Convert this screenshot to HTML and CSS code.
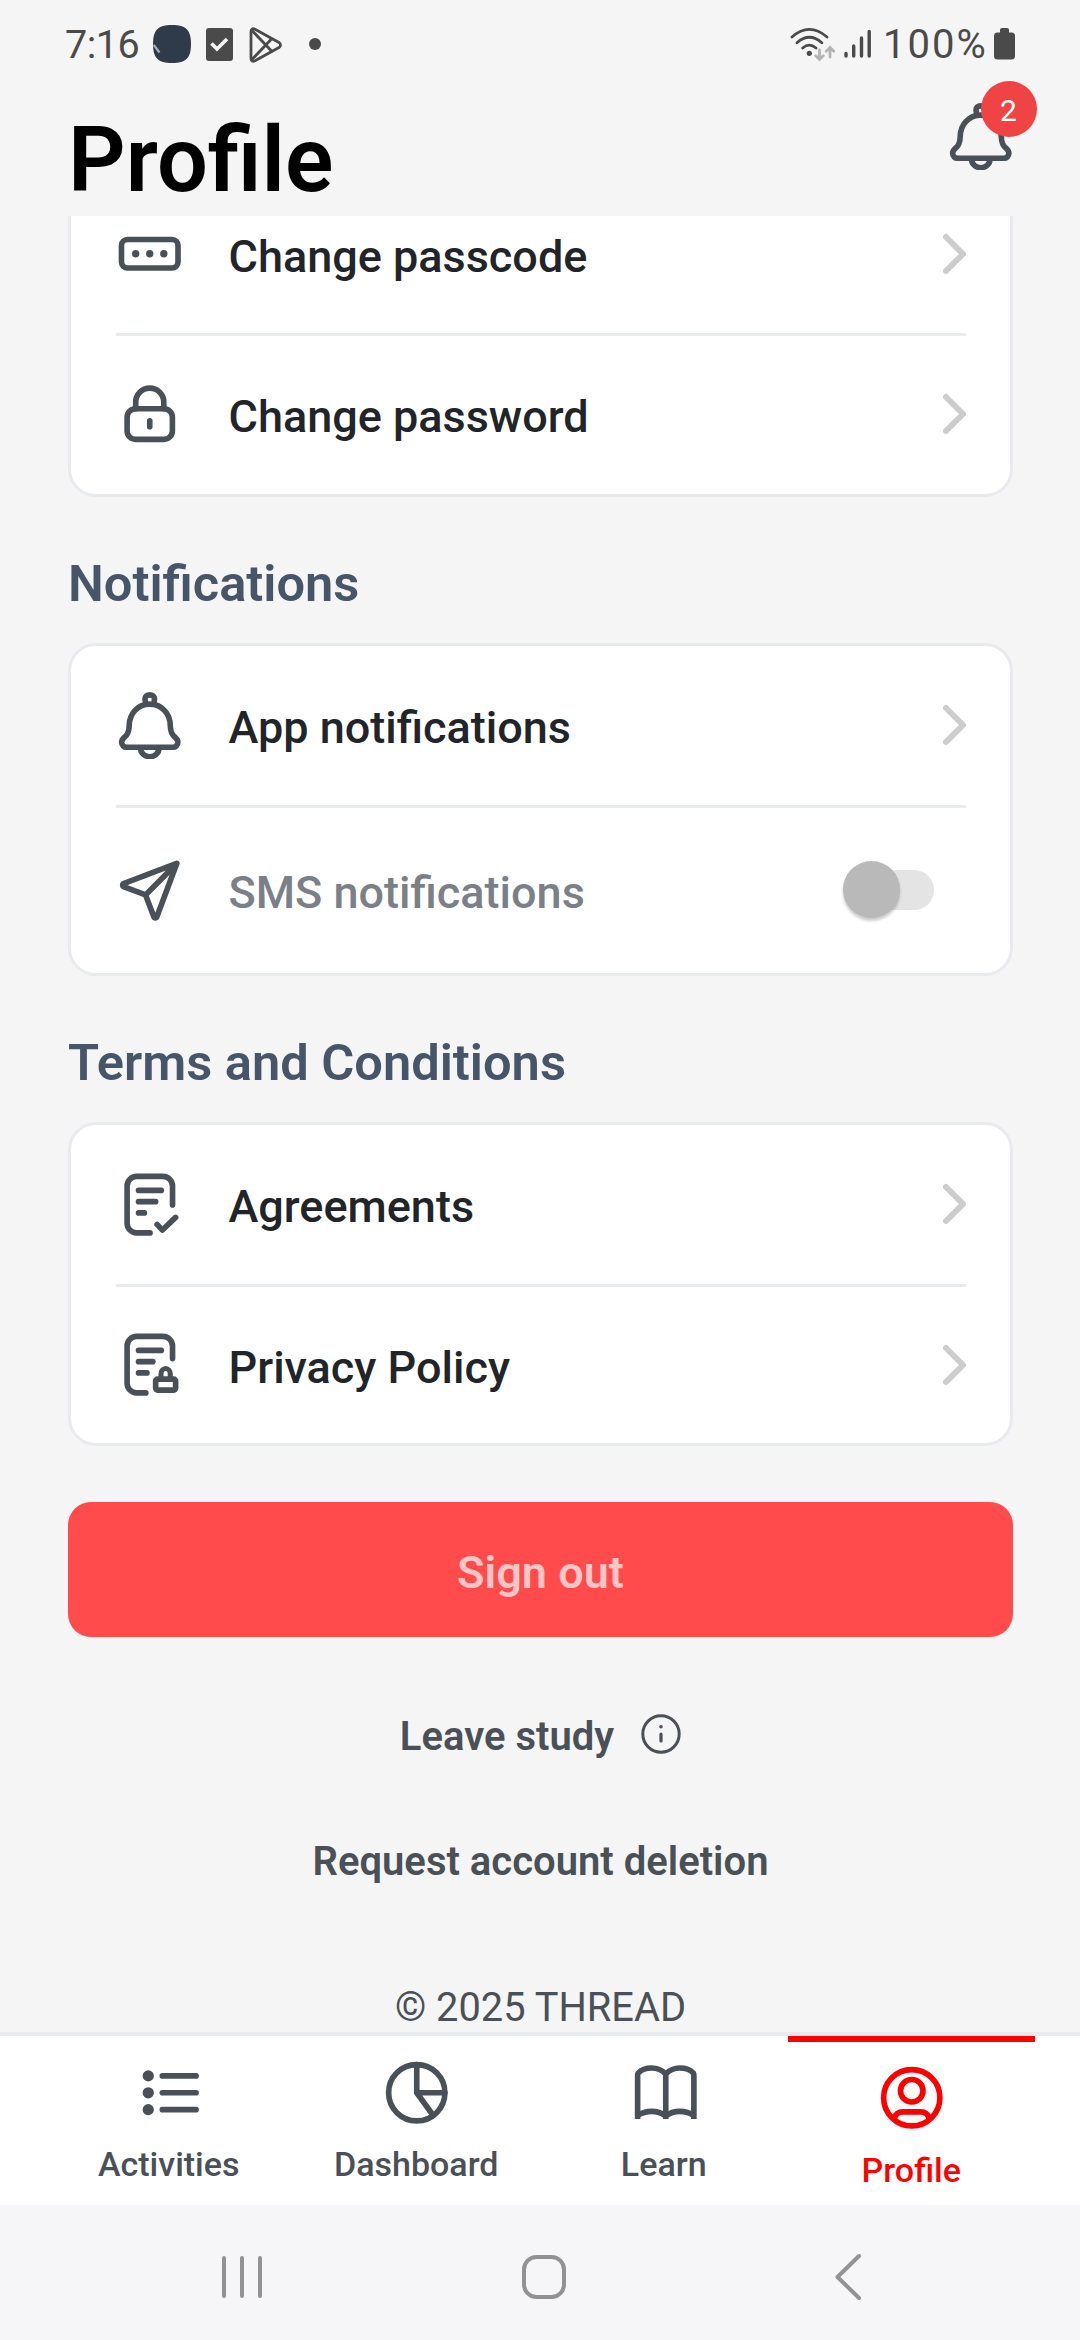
FILE: index.html
```
<!DOCTYPE html>
<html lang="en">
<head>
<meta charset="utf-8">
<title>Profile</title>
<link rel="stylesheet" href="styles.css">
</head>
<body>
<svg class="defs" aria-hidden="true">
  <symbol id="bell" viewBox="0 0 24 24">
    <path d="M4.7 12C4.7 7.7 7.8 4.3 12 4.3S19.3 7.7 19.3 12C19.4 14.4 19.9 15.2 20.8 15.9C21.6 16.6 22 17.2 22 17.9A1.75 1.75 0 0 1 20.2 19.65H3.8A1.75 1.75 0 0 1 2 17.9C2 17.2 2.4 16.6 3.2 15.9C4.1 15.2 4.6 14.4 4.7 12Z"/>
    <path d="M8.7 19.9C8.7 21.7 10.2 23 12 23S15.3 21.7 15.3 19.9M10.6 4.3L10.3 2.5C10.3 1.5 11 1 12 1S13.7 1.5 13.7 2.5L13.4 4.3"/>
  </symbol>
  <symbol id="chevron" viewBox="0 0 24 42"><path d="M4 4L21 21L4 38"/></symbol>
</svg>
<div class="screen">
  <div class="status">
    <span class="clock">7:16</span>
    <svg class="app-dot" viewBox="0 0 38 38"><path d="M19 0C33 0 38 5 38 19S33 38 19 38S0 33 0 19S5 0 19 0Z" fill="#2f3b4a"/><path d="M.8 20L6.5 27.5" stroke="#a9b0b5" stroke-width="2.2"/></svg>
    <svg class="task" viewBox="0 0 27 33"><rect width="27" height="33" rx="3" fill="#4a4a4a"/><path d="M5.5 15.5L11 21L21 11" fill="none" stroke="#f5f5f5" stroke-width="3.6"/></svg>
    <svg class="play" viewBox="0 0 34 36" fill="none" stroke="#4a4a4a" stroke-width="2.8" stroke-linejoin="round"><path d="M2 4.5C2 2 4 1.2 6 2.2L30 15.4C32 16.8 32 19.2 30 20.6L6 33.8C4 34.8 2 34 2 31.5Z"/><path d="M3 3.5L23 24.5M3 32.5L23 11.5"/></svg>
    <i class="more"></i>
    <svg class="wifi" viewBox="0 0 46 36" fill="none" stroke="#4a4a4a" stroke-width="2.8" stroke-linecap="round"><path d="M2 10Q19.3-5.2 37 10M7 15.8Q19.3 4.8 31.8 15.8M12.7 21Q19.3 15.2 26 21"/><circle cx="19.3" cy="26.3" r="2.6" fill="#4a4a4a" stroke="none"/><g stroke="#b3b3b3"><path d="M29.5 23V32M25.7 28.7L29.5 32.3L33.3 28.7M40 30V21M36.2 24.3L40 20.5L43.8 24.3"/></g></svg>
    <svg class="signal" viewBox="0 0 27 30" fill="none" stroke="#4a4a4a" stroke-width="3.4" stroke-linecap="round"><path d="M2 24.5V27M9.7 17V27M17.5 9V27M25.2 2.5V27"/></svg>
    <span class="percent">100%</span>
    <svg class="battery" viewBox="0 0 21 32" fill="#4a4a4a"><rect x="6" width="9" height="8" rx="2"/><rect y="4.5" width="21" height="27" rx="3.5"/></svg>
  </div>
  <header class="header">
    <h1>Profile</h1>
    <div class="alerts"><svg class="icon"><use href="#bell"/></svg><span class="badge">2</span></div>
  </header>
  <main class="content">
    <section class="card card-clipped">
      <div class="row">
        <svg class="icon" viewBox="0 0 24 24"><rect x="1.95" y="6.95" width="20.1" height="10.1" rx="2.1"/><g class="solid"><circle cx="7" cy="12" r="1.3"/><circle cx="12" cy="12" r="1.3"/><circle cx="17" cy="12" r="1.3"/></g></svg>
        <span class="label">Change passcode</span>
        <svg class="chevron"><use href="#chevron"/></svg>
      </div>
      <div class="row">
        <svg class="icon" viewBox="0 0 24 24"><rect x="3.95" y="10.2" width="16.1" height="10.9" rx="3"/><path d="M7 10.2V7.9A5 5 0 0 1 17 7.9V10.2M12 14.5V16.6"/></svg>
        <span class="label">Change password</span>
        <svg class="chevron"><use href="#chevron"/></svg>
      </div>
    </section>
    <h2>Notifications</h2>
    <section class="card card-notify">
      <div class="row">
        <svg class="icon"><use href="#bell"/></svg>
        <span class="label">App notifications</span>
        <svg class="chevron"><use href="#chevron"/></svg>
      </div>
      <div class="row">
        <svg class="icon" viewBox="0 0 24 24"><path d="M21.6 2.3L2.9 9.4C2.2 9.7 2.2 10.3 2.9 10.6L10.5 13.5L13.4 21.1C13.7 21.8 14.3 21.8 14.6 21.1ZM21.6 2.3L10.5 13.5"/></svg>
        <span class="label muted">SMS notifications</span>
        <span class="toggle"><i class="thumb"></i></span>
      </div>
    </section>
    <h2>Terms and Conditions</h2>
    <section class="card card-terms">
      <div class="row">
        <svg class="icon" viewBox="0 0 24 24"><path d="M20.1 12.1V5.3A3.4 3.4 0 0 0 16.7 1.9H7.35A3.4 3.4 0 0 0 3.95 5.3V18.6A3.4 3.4 0 0 0 7.35 22H12.1M8 6.9H16.1M8 10.9H14.1M8 14.9H10.1M14.6 19L16.5 21L21.2 16.5"/></svg>
        <span class="label">Agreements</span>
        <svg class="chevron"><use href="#chevron"/></svg>
      </div>
      <div class="row">
        <svg class="icon" viewBox="0 0 24 24"><path d="M20.1 9.8V5.3A3.4 3.4 0 0 0 16.7 1.9H7.35A3.4 3.4 0 0 0 3.95 5.3V18.6A3.4 3.4 0 0 0 7.35 22H10.6M8 6.9H16.1M8 10.9H13.1M8 14.9H11"/><rect x="14.1" y="17.1" width="7.1" height="3.9" rx=".7"/><path d="M16 17V15.3A1.65 2 0 0 1 19.3 15.3V17" stroke-width="1.8"/></svg>
        <span class="label">Privacy Policy</span>
        <svg class="chevron"><use href="#chevron"/></svg>
      </div>
    </section>
    <div class="signout">Sign out</div>
    <div class="leave"><span>Leave study</span><svg class="info" viewBox="0 0 40 40"><circle cx="20" cy="20" r="18.2" fill="none" stroke="#495057" stroke-width="3"/><circle cx="20" cy="12.8" r="1.8" fill="#495057"/><path d="M20 20V27" stroke="#495057" stroke-width="3.2" stroke-linecap="round"/></svg></div>
    <div class="deletion">Request account deletion</div>
    <div class="copyright">© 2025 THREAD</div>
  </main>
  <nav class="tabs">
    <div class="tab">
      <svg class="icon tab-list" viewBox="0 0 24 24"><g class="solid"><circle cx="4" cy="6" r="2"/><circle cx="4" cy="12" r="2"/><circle cx="4" cy="18" r="2"/></g><path d="M9 6H21M9 12H21M9 18H21"/></svg>
      <span class="tab-label">Activities</span>
    </div>
    <div class="tab">
      <svg class="icon" viewBox="0 0 24 24"><circle cx="12" cy="12" r="10"/><path d="M12 2V12H22M12 12L17.8 20"/></svg>
      <span class="tab-label">Dashboard</span>
    </div>
    <div class="tab">
      <svg class="icon tab-book" viewBox="0 0 24 24"><path stroke-linecap="butt" d="M12 21.3V5.3C10.6 3.9 9 3.2 7 3.2S3.2 3.9 2.2 5C2 5.3 2 5.6 2 6V21.3M12 5.3C13.4 3.9 15 3.2 17 3.2S20.8 3.9 21.8 5C22 5.3 22 5.6 22 6V21.3M2 20.1C3.4 19.1 5 18.6 7 18.6S10.6 19.2 12 20.3C13.4 19.2 15 18.6 17 18.6S20.6 19.1 22 20.1"/></svg>
      <span class="tab-label">Learn</span>
    </div>
    <div class="tab tab-active">
      <svg class="icon" viewBox="0 0 24 24"><circle cx="12" cy="12" r="10"/><circle cx="12" cy="9.5" r="4"/><path d="M5.8 19.3C6.2 17.9 7.3 17 8.8 17H15.2C16.7 17 17.8 17.9 18.2 19.3"/></svg>
      <span class="tab-label">Profile</span>
    </div>
  </nav>
  <div class="system">
    <svg class="recents" viewBox="0 0 40 44"><path d="M2 3V41M20 3V41M38 3V41"/></svg>
    <svg class="home" viewBox="0 0 44 44"><rect x="2" y="2" width="40" height="40" rx="12.5"/></svg>
    <svg class="back" viewBox="0 0 28 48"><path d="M25 3L3.5 24L25 45"/></svg>
  </div>
</div>
</body>
</html>
```
FILE: styles.css
```
* { box-sizing: border-box; }

body {
  margin: 0;
  background: #f5f5f5;
  font-family: Roboto, "Liberation Sans", sans-serif;
  color: #212529;
}

.defs { display: none; }

.screen {
  display: flex;
  flex-direction: column;
  width: 1080px;
  height: 2340px;
  overflow: hidden;
}

svg { flex: none; display: block; }

.icon {
  width: 67.5px;
  height: 67.5px;
  fill: none;
  stroke: #495057;
  stroke-width: 2;
  stroke-linecap: round;
  stroke-linejoin: round;
}

.solid { fill: #495057; stroke: none; }

/* Status bar */
.status {
  display: flex;
  align-items: center;
  height: 88px;
  padding: 0 65px;
  color: #4a4a4a;
  font-size: 39.5px;
}
.clock { width: 87.5px; letter-spacing: -.5px; }
.app-dot { width: 38px; height: 38px; }
.task { width: 27px; height: 33px; margin: 1px 0 0 15px; }
.play { width: 34px; height: 36px; margin: 1px 0 0 16.5px; }
.more { width: 12px; height: 12px; margin-left: 25.5px; border-radius: 50%; background: #4a4a4a; }
.wifi { width: 46px; height: 36px; margin: 2px 0 0 auto; }
.signal { width: 27px; height: 30px; margin-left: 8px; }
.percent { width: 102px; margin-left: 12px; font-size: 40px; letter-spacing: 2px; }
.battery { width: 21px; height: 32px; margin-left: 9px; }

/* Page header */
.header {
  display: flex;
  justify-content: space-between;
  height: 128px;
  padding: 0 66px 0 68px;
}
h1 { margin: 19.5px 0 0; font-size: 90px; line-height: 106px; font-weight: 600; color: #000; }
.alerts { position: relative; padding-top: 14.5px; }
.badge {
  position: absolute;
  left: 34px;
  top: -7px;
  width: 56px;
  height: 56px;
  border-radius: 50%;
  background: #f04444;
  color: #fff;
  font-size: 30px;
  line-height: 59px;
  text-align: center;
}

/* Settings list */
.content {
  height: 1816px;
  padding: 0 67px 0 68px;
  overflow: hidden;
}
.card {
  display: flex;
  flex-direction: column;
  background: #fff;
  border: 3px solid #e9eaee;
  border-radius: 28px;
  padding: 0 44px 0 45px;
}
.card-clipped { height: 325px; margin-top: -44px; }
.card-notify { height: 333px; }
.card-terms { height: 324px; }
.row { display: flex; align-items: center; flex: 1; }
.row:first-child { flex: none; height: 161.5px; border-bottom: 3px solid #e9eaee; }
.card-clipped .row:first-child { height: 161px; }
.card-clipped .row:last-child { padding-bottom: 2px; }
.label { flex: 1; margin-left: 45px; padding-top: 5px; font-size: 45px; font-weight: 500; line-height: 56px; }
.card-terms .row:last-child .label { padding-top: 6px; }
.muted { color: #7b7f87; }
.chevron { width: 24px; height: 42px; fill: none; stroke: #ccc; stroke-width: 6; stroke-linecap: round; stroke-linejoin: round; }
h2 { margin: 0; height: 146px; padding: 54px 0 0; font-size: 50.6px; font-weight: 600; line-height: 66px; color: #475569; }

.toggle { position: relative; width: 84px; height: 40px; margin-right: 32px; border-radius: 20px; background: #e4e4e4; }
.thumb {
  position: absolute;
  left: -7px;
  top: -9px;
  width: 57px;
  height: 57px;
  border-radius: 50%;
  background: #b9b9b9;
  box-shadow: 0 3px 3px rgba(0, 0, 0, .2);
}

.signout {
  height: 135px;
  margin-top: 56px;
  border-radius: 23px;
  background: #ff4b4b;
  color: #ffc5c5;
  font-size: 45px;
  font-weight: 600;
  line-height: 141px;
  text-align: center;
}
.leave, .deletion { font-size: 40px; font-weight: 600; line-height: 48px; color: #495057; }
.leave { display: flex; align-items: center; justify-content: center; gap: 27px; margin-top: 76px; }
.info { width: 40px; height: 40px; margin-top: -7px; }
.deletion { margin-top: 77px; text-align: center; }
.copyright { margin-top: 98px; font-size: 39.8px; line-height: 48px; text-align: center; color: #495057; }

/* Bottom tabs */
.tabs { display: flex; height: 173px; padding: 0 45px; background: #fff; border-top: 4px solid #e9eaee; }
.tab { display: flex; flex-direction: column; align-items: center; flex: 1; padding-top: 23px; }
.tab-list, .tab-book { position: relative; left: 2px; }
.tab-label { margin-top: 17px; font-size: 34px; font-weight: 500; line-height: 40px; color: #495057; }
.tab-active { border-top: 6px solid #f00; padding-top: 22px; }
.tab-active .icon { stroke: #f00; }
.tab-active .tab-label { margin-top: 18px; color: #f00; }

/* System navigation */
.system { display: flex; align-items: center; height: 135px; padding: 9px 218px 0 222px; background: #f6f6f8; }
.system svg { fill: none; stroke: #929292; stroke-width: 4; stroke-linecap: round; stroke-linejoin: round; }
.recents { width: 40px; height: 44px; }
.home { width: 44px; height: 44px; margin-left: 260px; }
.back { width: 28px; height: 48px; margin-left: auto; }
```
